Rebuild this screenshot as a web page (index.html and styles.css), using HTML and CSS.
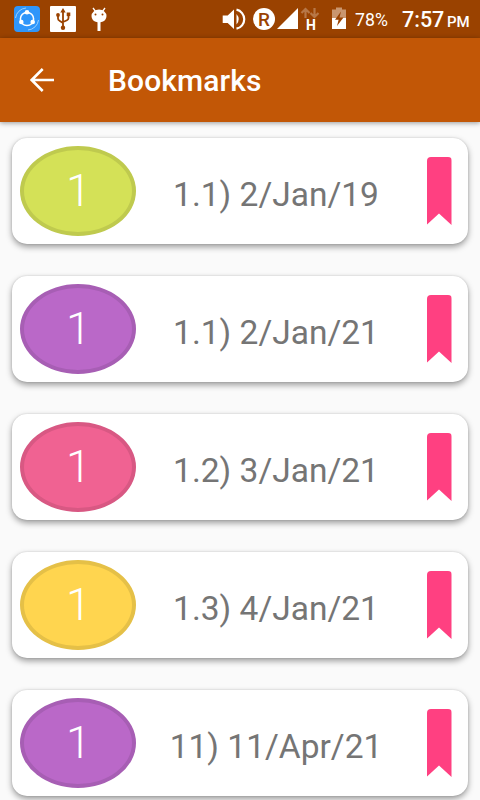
FILE: index.html
```html
<!DOCTYPE html>
<html lang="en">
<head>
  <meta charset="UTF-8" />
  <meta name="viewport" content="width=device-width, initial-scale=1" />
  <title>Bookmarks</title>
  <link rel="stylesheet" href="styles.css">
</head>
<body>

  <!-- STATUS BAR -->
  <div class="status-bar">
    <svg class="status-icons" width="120" height="38" viewBox="0 0 120 38" aria-hidden="true">
      <rect x="14" y="6" width="26" height="26" rx="4" fill="#2f96fa" />
      <g fill="none" stroke="#fff">
        <circle cx="27" cy="19" r="6.6" stroke-width="1.5" />
        <path d="M15.5 18A11.5 11.5 0 0 1 26 8M38.5 20A11.5 11.5 0 0 1 28 30" stroke="#9bd0ff" />
      </g>
      <g fill="#fff">
        <circle cx="27" cy="12.3" r="2.3" />
        <circle cx="21.3" cy="22" r="2.3" />
        <circle cx="32.7" cy="22" r="2.3" />
        <rect x="50" y="6" width="26" height="26" rx="1" />
      </g>
      <g fill="none" stroke="#9a4200" stroke-width="1.8">
        <path d="M63 27V11M58 15v3.5q0 1.5 1.5 2.2L63 23M68.5 14v4q0 1.5-1.5 2.2L63 22" />
      </g>
      <g fill="#9a4200">
        <path d="M63 8l2.7 4.5h-5.4z" />
        <circle cx="63" cy="27.7" r="2.2" />
        <circle cx="58" cy="15" r="1.9" />
        <rect x="66.7" y="12.5" width="3.6" height="3.6" />
      </g>
      <path d="M93 8l3 4M105 8l-3 4" stroke="#fff" stroke-width="1.3" />
      <path d="M91.5 16a7.5 6.5 0 0 1 15 0a7.5 6.5 0 0 1-6 6.3V31h-3v-8.7a7.5 6.5 0 0 1-6-6.3z" fill="#fff" />
      <circle cx="95.5" cy="14.5" r="1" fill="#9a4200" />
      <circle cx="102.5" cy="14.5" r="1" fill="#9a4200" />
    </svg>
    <svg class="system-icons" width="130" height="38" viewBox="220 0 130 38" aria-hidden="true">
      <path d="M222.7 15.5h5l6.3-6V29l-6.3-6h-5z" fill="#fff" />
      <path d="M236.5 14q4.5 5.2 0 10.5z" fill="#fff" />
      <path d="M236.5 9.7a9.7 9.7 0 0 1 0 19" fill="none" stroke="#fff" stroke-width="2.2" />
      <circle cx="264" cy="19" r="11" fill="#fff" />
      <text x="264" y="25.500" class="roaming">R</text>
      <path d="M298 8v21h-21z" fill="#fff" />
      <path d="M305.5 18v-8M301.5 13l4-4 4 4M314.5 8v8M310.5 13l4 4 4-4" fill="none" stroke="#b77747" stroke-width="2.2" />
      <text x="311" y="30" class="network">H</text>
      <path d="M336 7.5h6v2h4V18h-14V9.5h4z" fill="#c9966f" />
      <path d="M332 18h14v11h-14z" fill="#fff" />
      <path d="M341 11.5l-6 8.3h3.6L337 26l6.5-8.5h-4z" fill="#9a4200" />
    </svg>
    <span class="battery">78%</span>
    <span class="clock">7:57</span>
    <span class="meridiem">PM</span>
  </div>

  <!-- TOOLBAR -->
  <header class="toolbar">
    <svg class="back" width="24" height="24" viewBox="0 0 24 24" aria-label="Back">
      <path d="M24 12H2M12.7 1L1.7 12l11 11" fill="none" stroke="#fff" stroke-width="2.6" />
    </svg>
    <h1>Bookmarks</h1>
  </header>

  <!-- BOOKMARK LIST -->
  <main class="list">
    <article class="card">
      <div class="badge lime">1</div>
      <p class="label">1.1) 2/Jan/19</p>
      <div class="ribbon"></div>
    </article>
    <article class="card">
      <div class="badge purple">1</div>
      <p class="label">1.1) 2/Jan/21</p>
      <div class="ribbon"></div>
    </article>
    <article class="card">
      <div class="badge pink">1</div>
      <p class="label">1.2) 3/Jan/21</p>
      <div class="ribbon"></div>
    </article>
    <article class="card">
      <div class="badge yellow">1</div>
      <p class="label">1.3) 4/Jan/21</p>
      <div class="ribbon"></div>
    </article>
    <article class="card">
      <div class="badge purple">1</div>
      <p class="label">11) 11/Apr/21</p>
      <div class="ribbon"></div>
    </article>
  </main>

</body>
</html>
```

FILE: styles.css
```css
* {
  box-sizing: border-box;
}

body {
  height: 800px;
  margin: 0;
  display: flex;
  flex-direction: column;
  overflow: hidden;
  background: #fafafa;
  font-family: Roboto, sans-serif;
}

.status-bar {
  display: flex;
  flex: none;
  height: 38px;
  background: #9a4200;
  color: #fff;
  line-height: 38px;
  white-space: nowrap;
}

.system-icons {
  margin-left: 100px;
}

.roaming,
.network {
  font-size: 19px;
  font-weight: 500;
  text-anchor: middle;
  fill: #9a4200;
}

.network {
  font-size: 14px;
  font-weight: 700;
  fill: #fff;
}

.battery {
  width: 47px;
  padding: 1px 0 0 5px;
  font-size: 17.7px;
}

.clock {
  width: 50px;
  padding: 1px 0 0 5px;
  font-size: 21.5px;
  font-weight: 500;
}

.meridiem {
  padding: 3px 0 0 0;
  font-size: 15px;
  font-weight: 500;
}

.toolbar {
  display: flex;
  flex: none;
  align-items: center;
  height: 84px;
  padding-left: 30px;
  background: #c25706;
  box-shadow: 0 1px 5px rgba(0, 0, 0, 0.4);
}

h1 {
  margin: 0 0 0 54px;
  color: #fff;
  font-size: 30px;
  font-weight: 500;
  letter-spacing: 0.1px;
}

.list {
  display: flex;
  flex-direction: column;
  gap: 32px;
  padding: 16px 12px;
}

.card {
  display: flex;
  flex: none;
  height: 106px;
  padding: 8px;
  border-radius: 15px;
  background: #fff;
  box-shadow: 0 3px 6px rgba(0, 0, 0, 0.38), 0 0 2px rgba(0, 0, 0, 0.15);
}

.badge {
  width: 116px;
  height: 90px;
  padding-left: 1px;
  border: 4px solid;
  border-radius: 50%;
  color: #fff;
  font-size: 45px;
  font-weight: 300;
  line-height: 81px;
  text-align: center;
}

.lime {
  background: #d4e157;
  border-color: #bfca4e;
}

.purple {
  background: #ba68c8;
  border-color: #a75eb4;
}

.pink {
  background: #f06292;
  border-color: #d85883;
}

.yellow {
  background: #ffd54f;
  border-color: #e5c047;
}

.label {
  width: 280px;
  margin: 0;
  color: #757575;
  font-size: 33.5px;
  line-height: 98px;
  text-align: center;
  white-space: nowrap;
}

.ribbon {
  width: 25px;
  height: 68px;
  margin: 11px 0 0 10.5px;
  border-radius: 4px 4px 0 0;
  background: #ff4081;
  clip-path: polygon(0 0, 100% 0, 100% 100%, 50% 83%, 0 100%);
}
```
